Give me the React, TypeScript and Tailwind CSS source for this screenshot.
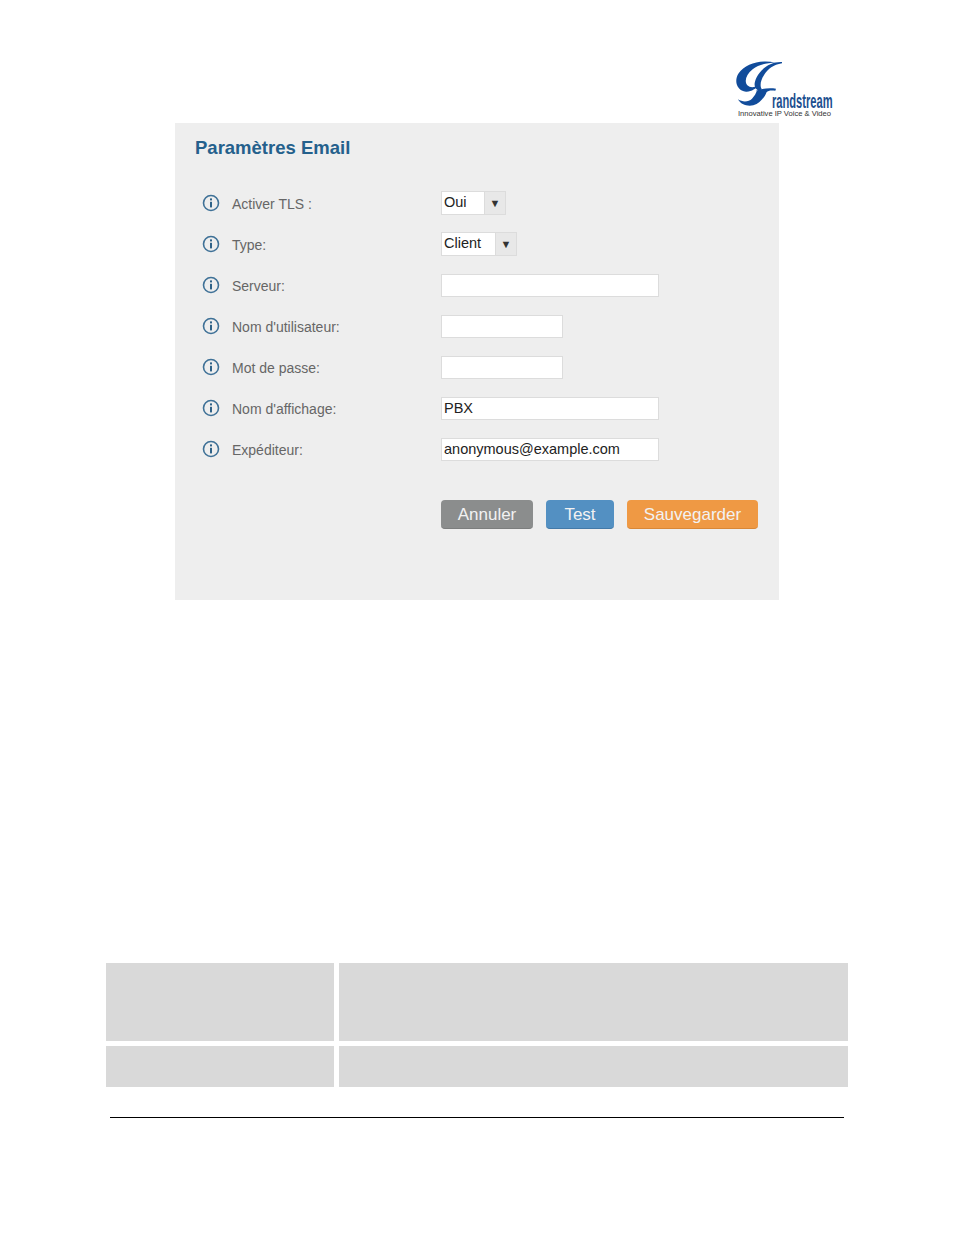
const fields = [
  { label: "Activer TLS :", kind: "select", value: "Oui", width: "w-[65px]" },
  { label: "Type:", kind: "select", value: "Client", width: "w-[76px]" },
  { label: "Serveur:", kind: "input", value: "", width: "w-[218px]" },
  { label: "Nom d'utilisateur:", kind: "input", value: "", width: "w-[122px]" },
  { label: "Mot de passe:", kind: "input", value: "", width: "w-[122px]" },
  { label: "Nom d'affichage:", kind: "input", value: "PBX", width: "w-[218px]" },
  { label: "Expéditeur:", kind: "input", value: "anonymous@example.com", width: "w-[218px]" },
];

function InfoIcon() {
  return (
    <svg width="18" height="18" viewBox="0 0 18 18" fill="none" className="shrink-0">
      <circle cx="9" cy="9" r="7.5" stroke="#3f7197" strokeWidth="1.6" />
      <rect x="8" y="7.8" width="2" height="5.6" fill="#2f6288" />
      <rect x="8" y="4.4" width="2" height="2" fill="#2f6288" />
    </svg>
  );
}

function Logo() {
  return (
    <div className="relative w-[98px] h-[57px]">
      <svg width="60" height="60" viewBox="0 0 180 180" className="absolute left-[-4px] top-[-2px]">
        <g fill="#114c9b">
          <path d="M130 8 C90 -2 40 10 20 40 C5 62 14 92 42 95 C58 96 72 86 80 76 C66 84 54 84 46 76 C36 64 42 44 62 28 C80 14 105 8 130 8 Z" />
          <path d="M150 6 C118 4 88 24 74 52 C64 72 66 86 80 92 L90 88 C82 78 86 60 98 42 C108 28 124 14 150 10 Z" />
          <path d="M72 92 C90 85 112 84 132 86 L130 92 C116 90 108 92 104 96 C98 112 84 130 64 136 C46 140 26 134 18 118 C32 127 50 126 60 116 C68 108 72 100 74 94 Z" />
        </g>
      </svg>
      <span className="absolute left-[36px] top-[30px] text-[21px] leading-[18px] font-bold text-[#1d4f8f] font-['Liberation_Sans',sans-serif] scale-x-[0.53] origin-left whitespace-nowrap">
        randstream
      </span>
      <span className="absolute left-[2px] top-[48px] text-[7.6px] leading-[8px] text-[#333333] font-['Liberation_Sans',sans-serif] whitespace-nowrap">
        Innovative IP Voice &amp; Video
      </span>
    </div>
  );
}

function Field({ kind, value, width }: { kind: string; value: string; width: string }) {
  if (kind === "select") {
    return (
      <div className={`flex h-[24px] border border-[#dcdcdc] bg-white ${width}`}>
        <span className="flex-1 pl-[2px] text-[14.5px] leading-[20px] text-[#222222]">{value}</span>
        <span className="flex w-[21px] items-center justify-center bg-[#e8e8e8] border-l border-[#dcdcdc] text-[11px] text-[#333333]">
          ▼
        </span>
      </div>
    );
  }
  return (
    <div className={`h-[23px] self-end border border-[#dcdcdc] bg-white pl-[2px] text-[14.5px] leading-[20px] text-[#222222] ${width}`}>
      {value}
    </div>
  );
}

export default function App() {
  return (
    <div className="min-h-[1235px] bg-white font-['Liberation_Sans',Arial,sans-serif]">
      <div className="flex justify-end pt-[62px] pr-[120px] h-[123px]">
        <Logo />
      </div>

      <div className="ml-[175px] w-[604px] h-[477px] bg-[#eeeeee] pt-[13px]">
        <h2 className="pl-[20px] text-[18.5px] leading-[24px] font-bold text-[#24608c]">Paramètres Email</h2>

        <div className="mt-[31px] flex flex-col gap-[17px] pl-[27px]">
          {fields.map((f) => (
            <div key={f.label} className="flex h-[24px] items-center">
              <InfoIcon />
              <span className="ml-[12px] w-[209px] pt-[2px] text-[14px] text-[#666666]">{f.label}</span>
              <Field kind={f.kind} value={f.value} width={f.width} />
            </div>
          ))}
        </div>

        <div className="mt-[39px] ml-[266px] flex gap-[13px] text-[17px] text-[#f2f2f2]">
          <button className="h-[29px] w-[92px] pt-[1px] rounded-[4px] bg-[#8b8d8d] border-b border-[#7c7e7e]">Annuler</button>
          <button className="h-[29px] w-[68px] pt-[1px] rounded-[4px] bg-[#5390c2] border-b border-[#4279a8]">Test</button>
          <button className="h-[29px] w-[131px] pt-[1px] rounded-[4px] bg-[#ef9944] border-b border-[#d98736]">Sauvegarder</button>
        </div>
      </div>

      <div className="mt-[363px] ml-[106px] grid w-[742px] grid-cols-[228px_509px] grid-rows-[78px_41px] gap-[5px]">
        <div className="bg-[#d9d9d9]" />
        <div className="bg-[#d9d9d9]" />
        <div className="bg-[#d9d9d9]" />
        <div className="bg-[#d9d9d9]" />
      </div>

      <div className="mt-[30px] ml-[110px] w-[734px] h-px bg-black" />
    </div>
  );
}
